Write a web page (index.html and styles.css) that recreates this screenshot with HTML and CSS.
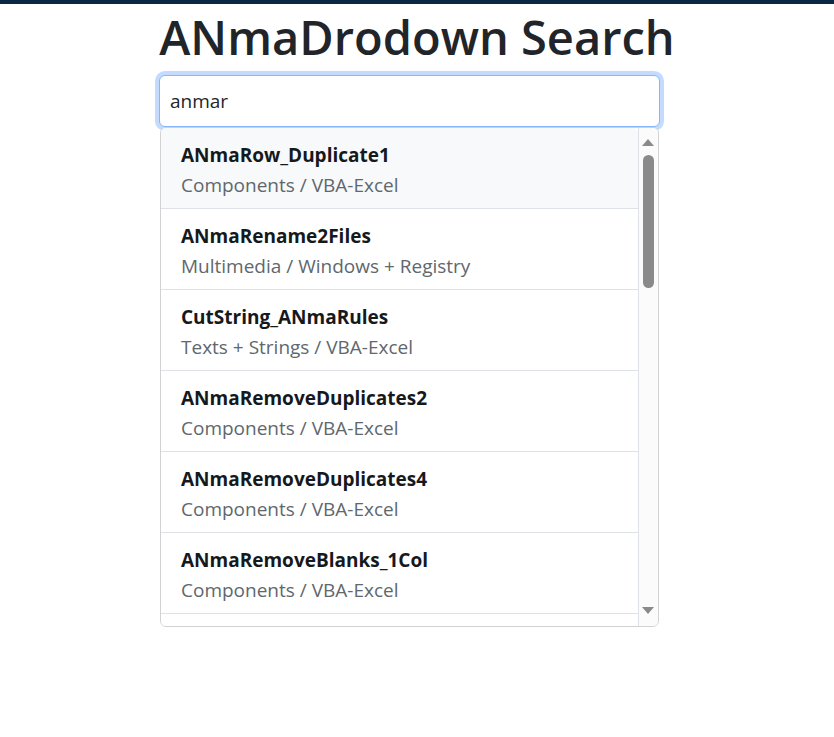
FILE: index.html
```html
<!DOCTYPE html>
<html lang="en">
<head>
<meta charset="utf-8">
<title>ANmaDrodown Search</title>
<link rel="stylesheet" href="styles.css">
</head>
<body>
<div class="topbar"></div>
<main class="page">
  <h1 class="title">ANmaDrodown Search</h1>
  <div class="search">
    <input class="search-input" type="text" value="anmar">
    <div class="results">
      <ul class="items">
        <li class="item active"><div class="item-name">ANmaRow_Duplicate1</div><div class="item-path">Components / VBA-Excel</div></li>
        <li class="item"><div class="item-name">ANmaRename2Files</div><div class="item-path">Multimedia / Windows + Registry</div></li>
        <li class="item"><div class="item-name">CutString_ANmaRules</div><div class="item-path">Texts + Strings / VBA-Excel</div></li>
        <li class="item"><div class="item-name">ANmaRemoveDuplicates2</div><div class="item-path">Components / VBA-Excel</div></li>
        <li class="item"><div class="item-name">ANmaRemoveDuplicates4</div><div class="item-path">Components / VBA-Excel</div></li>
        <li class="item"><div class="item-name">ANmaRemoveBlanks_1Col</div><div class="item-path">Components / VBA-Excel</div></li>
        <li class="item item-clipped"></li>
      </ul>
      <div class="scrollbar" aria-hidden="true">
        <div class="sb-btn sb-up"><span class="tri-up"></span></div>
        <div class="sb-track"><div class="sb-thumb"></div></div>
        <div class="sb-btn sb-down"><span class="tri-down"></span></div>
      </div>
    </div>
  </div>
</main>
</body>
</html>
```

FILE: styles.css
```css
* { box-sizing: border-box; }

body {
  margin: 0;
  background: #fff;
  font-family: "Open Sans", "Noto Sans", sans-serif;
  color: #212529;
}

.topbar {
  height: 4px;
  background: #0a2744;
}

.page {
  display: flex;
  flex-direction: column;
}

.title {
  margin: 5px 0 0;
  font-size: 47px;
  line-height: 56px;
  font-weight: 600;
  text-align: center;
  color: #212529;
}

.search {
  width: 501px;
  margin: 10px 0 0 calc(50% - 258px);
}

.search-input {
  display: block;
  width: 501px;
  height: 52px;
  margin: 0;
  padding: 0 10px;
  font-family: inherit;
  font-size: 19px;
  color: #212529;
  background: #fff;
  border: 1px solid #86b7fe;
  border-radius: 6px;
  box-shadow: 0 0 0 4px rgba(13, 110, 253, 0.25);
  outline: none;
}

.results {
  display: flex;
  width: 499px;
  height: 500px;
  margin: 0 0 0 1px;
  border: 1px solid #d2d2d2;
  border-radius: 6px;
  overflow: hidden;
  background: #fff;
}

.items {
  flex: 1;
  list-style: none;
  margin: 0;
  padding: 0;
  overflow: hidden;
  border-right: 1px solid #dee2e6;
}

.item {
  height: 81px;
  padding: 12px 20px 8px;
  border-bottom: 1px solid #dee2e6;
  background: #fff;
}

.item.active {
  background: #f8f9fa;
  border-top-right-radius: 6px;
}

.item-name {
  font-size: 19px;
  line-height: 30px;
  font-weight: 700;
  color: #16191c;
  white-space: nowrap;
}

.item-path {
  font-size: 19px;
  line-height: 30px;
  color: #60676d;
  white-space: nowrap;
}

.scrollbar {
  width: 19px;
  display: flex;
  flex-direction: column;
  background: #fbfbfb;
}

.sb-btn {
  display: flex;
  justify-content: center;
}

.sb-up {
  height: 27px;
  padding-top: 11px;
  padding-right: 1px;
}

.sb-down {
  height: 32px;
  padding-top: 13px;
  padding-right: 1px;
}

.tri-up {
  width: 0;
  height: 0;
  border-left: 6px solid transparent;
  border-right: 6px solid transparent;
  border-bottom: 7px solid #8a8a8a;
}

.tri-down {
  width: 0;
  height: 0;
  border-left: 6px solid transparent;
  border-right: 6px solid transparent;
  border-top: 7px solid #8a8a8a;
}

.sb-track {
  flex: 1;
  padding: 0 4px 0 4px;
}

.sb-thumb {
  height: 133px;
  width: 11px;
  border-radius: 6px;
  background: #8a8a8a;
}
```
